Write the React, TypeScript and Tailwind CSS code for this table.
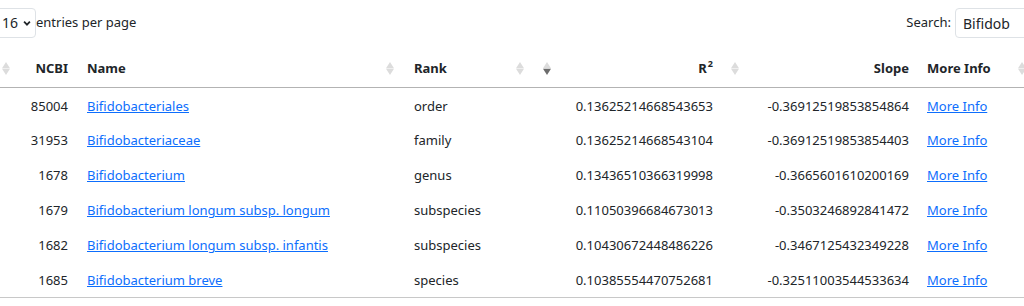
import React from 'react';

interface Row {
  ncbi: number;
  name: string;
  rank: string;
  r2: string;
  slope: string;
}

const rows: Row[] = [
  { ncbi: 85004, name: 'Bifidobacteriales', rank: 'order', r2: '0.13625214668543653', slope: '-0.36912519853854864' },
  { ncbi: 31953, name: 'Bifidobacteriaceae', rank: 'family', r2: '0.13625214668543104', slope: '-0.36912519853854403' },
  { ncbi: 1678, name: 'Bifidobacterium', rank: 'genus', r2: '0.13436510366319998', slope: '-0.3665601610200169' },
  { ncbi: 1679, name: 'Bifidobacterium longum subsp. longum', rank: 'subspecies', r2: '0.11050396684673013', slope: '-0.3503246892841472' },
  { ncbi: 1682, name: 'Bifidobacterium longum subsp. infantis', rank: 'subspecies', r2: '0.10430672448486226', slope: '-0.3467125432349228' },
  { ncbi: 1685, name: 'Bifidobacterium breve', rank: 'species', r2: '0.10385554470752681', slope: '-0.32511003544533634' },
];

function SortIcon({ dir }: { dir?: 'asc' | 'desc' }) {
  return (
    <svg width="8" height="13" viewBox="0 0 8 13" className="shrink-0">
      <polygon points="4,0 8,6.2 0,6.2" fill={dir === 'asc' ? '#6c6c6c' : '#dcdcdc'} />
      <polygon points="0,6.8 8,6.8 4,13" fill={dir === 'desc' ? '#6c6c6c' : '#dcdcdc'} />
    </svg>
  );
}

export default function App() {
  return (
    <div className="w-[1024px] h-[306px] overflow-hidden bg-white font-['Noto_Sans',sans-serif] text-[13px] text-[#212529]">
      <div className="w-[1040px]">
        <div className="flex items-center justify-between pt-[8px] h-[38px]">
          <div className="flex items-center">
            <div className="-ml-[4px] flex items-center h-[30px] w-[40px] border border-[#dee2e6] rounded-[4px] pl-[5px] pr-[4px] gap-[5px]">
              <span className="text-[14px] leading-none">16</span>
              <svg width="9" height="7" viewBox="0 0 9 7">
                <path d="M1.2 1.5 L4.5 4.8 L7.8 1.5" fill="none" stroke="#212529" strokeWidth="2" />
              </svg>
            </div>
            <span>entries per page</span>
          </div>
          <div className="flex items-center gap-[4px] pr-[4px]">
            <span>Search:</span>
            <div className="h-[30px] w-[81px] border border-[#dee2e6] rounded-[4px] pl-[7px] flex items-center">
              <span className="text-[14px]">Bifidob</span>
            </div>
          </div>
        </div>

        <table className="mt-[12px] table-fixed border-collapse w-[1040px]">
          <colgroup>
            <col className="w-[78px]" />
            <col className="w-[324px]" />
            <col className="w-[128px]" />
            <col className="w-[192px]" />
            <col className="w-[196px]" />
            <col className="w-[122px]" />
          </colgroup>
          <thead>
            <tr className="border-b border-[#b3b3b3]">
              <th className="pt-[8px] pb-[9px] pl-[2px] pr-[10px] font-bold leading-[20px]">
                <div className="flex items-center justify-between">
                  <SortIcon />
                  <span>NCBI</span>
                </div>
              </th>
              <th className="pt-[8px] pb-[9px] pl-[9px] pr-[8px] font-bold leading-[20px]">
                <div className="flex items-center justify-between">
                  <span>Name</span>
                  <SortIcon />
                </div>
              </th>
              <th className="pt-[8px] pb-[9px] pl-[12px] pr-[6px] font-bold leading-[20px]">
                <div className="flex items-center justify-between">
                  <span>Rank</span>
                  <SortIcon />
                </div>
              </th>
              <th className="pt-[8px] pb-[9px] pl-[13px] pr-[9px] font-bold leading-[20px]">
                <div className="flex items-center justify-between">
                  <SortIcon dir="desc" />
                  <span>
                    R<sup className="text-[9px] -top-[6px] ml-[1px]">2</sup>
                  </span>
                </div>
              </th>
              <th className="pt-[8px] pb-[9px] pl-[9px] pr-[9px] font-bold leading-[20px]">
                <div className="flex items-center justify-between">
                  <SortIcon />
                  <span>Slope</span>
                </div>
              </th>
              <th className="pt-[8px] pb-[9px] pl-[9px] pr-[14px] font-bold leading-[20px]">
                <div className="flex items-center justify-between">
                  <span>More Info</span>
                  <SortIcon />
                </div>
              </th>
            </tr>
          </thead>
          <tbody>
            {rows.map((r, i) => (
              <tr key={r.ncbi} className={i === rows.length - 1 ? 'border-b border-[#c8c8c8]' : ''}>
                <td className="h-[35px] pt-[2px] pr-[10px] text-right">{r.ncbi}</td>
                <td className="pt-[2px] pl-[9px]">
                  <a href="#" className="text-[#0d6efd] underline">{r.name}</a>
                </td>
                <td className="pt-[2px] pl-[12px]">{r.rank}</td>
                <td className="pt-[2px] pr-[9px] text-right">{r.r2}</td>
                <td className="pt-[2px] pr-[9px] text-right">{r.slope}</td>
                <td className="pt-[2px] pl-[9px]">
                  <a href="#" className="text-[#0d6efd] underline">More Info</a>
                </td>
              </tr>
            ))}
          </tbody>
        </table>
      </div>
    </div>
  );
}
